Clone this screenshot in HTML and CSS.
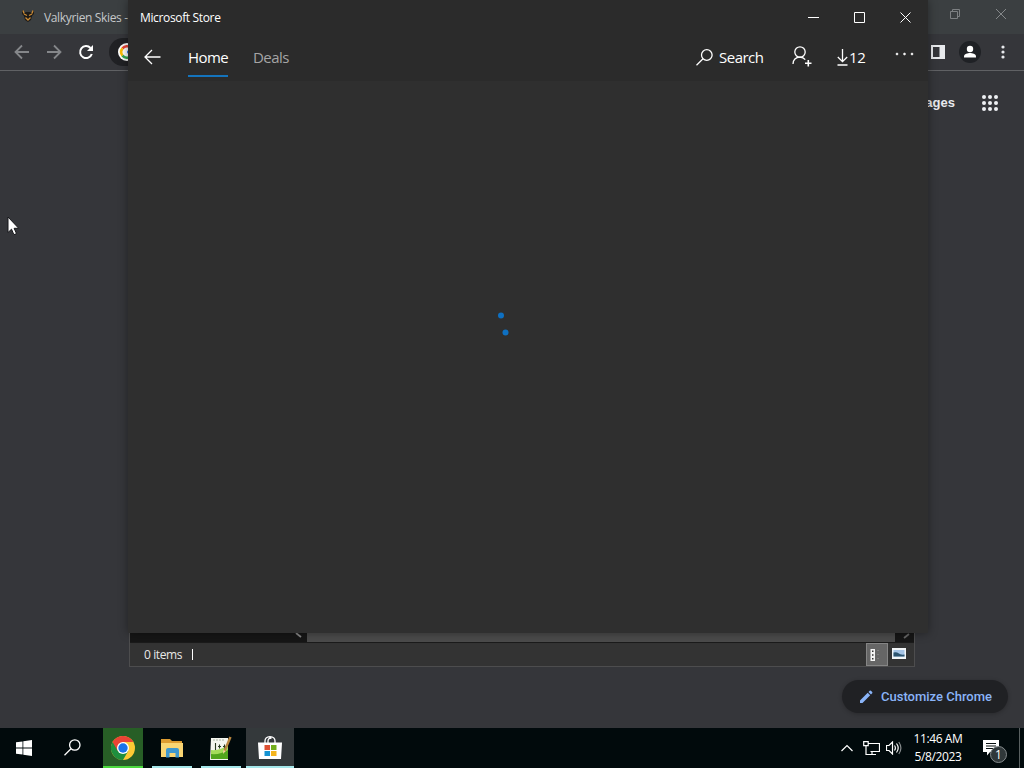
FILE: index.html
```html
<!DOCTYPE html>
<html lang="en">
<head>
    <meta charset="UTF-8">
    <meta name="viewport" content="width=device-width, initial-scale=1.0">
    <title>Desktop</title>
    <link rel="stylesheet" href="styles.css">
</head>
<body>
    <div class="desktop">
        <!-- Browser window -->
        <div class="browser">
            <div class="tab-strip">
                <svg class="favicon" width="14" height="14" viewBox="0 0 14 14">
                    <path d="M1 1l2 3 2-1h4l2 1 2-3v4l-2 2-1 4-3 2-3-2-1-4-2-2z" fill="#1c1a18"/>
                    <path d="M2 1.500l1 3M12 1.500l-1 3M3 5l3 1.500M11 5L8 6.500M4.500 8.500L7 11l2.500-2.500" fill="none" stroke="#c98a35" stroke-width="1.300"/>
                </svg>
                <span class="tab-title">Valkyrien Skies -</span>
                <div class="browser-controls">
                    <svg width="12" height="12" viewBox="0 0 12 12" fill="none" stroke="#7d8082"><path d="M1.500 3.500h7v7h-7zM3.500 3V1.500h7v7H9"/></svg>
                    <svg width="12" height="12" viewBox="0 0 12 12" fill="none" stroke="#85888a"><path d="M1 1l10 10M11 1L1 11"/></svg>
                </div>
            </div>
            <div class="toolbar">
                <svg width="16" height="16" viewBox="0 0 16 16" fill="none" stroke="#85878a" stroke-width="1.800"><path d="M15 8H2M8 1.500L1.500 8 8 14.500"/></svg>
                <svg width="16" height="16" viewBox="0 0 16 16" fill="none" stroke="#85878a" stroke-width="1.800"><path d="M1 8h13M8 1.500L14.500 8 8 14.500"/></svg>
                <svg width="16" height="16" viewBox="0 0 16 16" fill="none" stroke="#fff" stroke-width="2"><path d="M13.800 10A6 6 0 1 1 12.500 4"/><path d="M15 1v6H9z" fill="#fff" stroke="none"/></svg>
                <div class="address">
                    <svg width="18" height="18" viewBox="0 0 18 18">
                        <circle cx="9" cy="9" r="9" fill="#fff"/>
                        <g fill="none" stroke-width="2.600">
                            <path d="M4.500 5.400A5.800 5.800 0 0 1 13 4.800" stroke="#ea4335"/>
                            <path d="M4.500 5.400a5.800 5.800 0 0 0 0 7.200" stroke="#fbbc05"/>
                            <path d="M4.500 12.600a5.800 5.800 0 0 0 8.500.6" stroke="#34a853"/>
                            <path d="M9 9h5.500a6 6 0 0 1-1.500 4.200" stroke="#4285f4"/>
                        </g>
                    </svg>
                </div>
                <div class="toolbar-end">
                    <svg width="14" height="14" viewBox="0 0 14 14"><path fill="#e8eaed" fill-rule="evenodd" d="M0 0h14v14H0zM2 2v10h6.500V2z"/></svg>
                    <svg class="profile" width="22" height="22" viewBox="0 0 22 22"><circle cx="11" cy="11" r="11" fill="#1f2125"/><circle cx="11" cy="8" r="3.200" fill="#fff"/><path d="M5 16.500v-1.200c0-2.200 3.800-3.300 6-3.300s6 1.100 6 3.300v1.200z" fill="#fff"/></svg>
                    <svg width="4" height="14" viewBox="0 0 4 14" fill="#e8eaed"><circle cx="2" cy="2" r="1.600"/><circle cx="2" cy="7" r="1.600"/><circle cx="2" cy="12" r="1.600"/></svg>
                </div>
            </div>
            <div class="new-tab">
                <div class="page-links">
                    <span class="images-link">Images</span>
                    <svg width="16" height="16" viewBox="0 0 16 16" fill="#eef0f2">
                        <circle cx="2" cy="2" r="2"/><circle cx="8" cy="2" r="2"/><circle cx="14" cy="2" r="2"/>
                        <circle cx="2" cy="8" r="2"/><circle cx="8" cy="8" r="2"/><circle cx="14" cy="8" r="2"/>
                        <circle cx="2" cy="14" r="2"/><circle cx="8" cy="14" r="2"/><circle cx="14" cy="14" r="2"/>
                    </svg>
                </div>
                <div class="customize">
                    <svg width="14" height="14" viewBox="0 0 14 14" fill="#8ab4f8"><path d="M1 10.500L8.700 2.800l2.500 2.500L3.500 13H1zM9.500 2l1.200-1.200q.6-.5 1.200 0l1.300 1.300q.5.600 0 1.200L12 4.500z"/></svg>
                    <span>Customize Chrome</span>
                </div>
            </div>
        </div>

        <!-- File explorer, mostly covered -->
        <div class="explorer">
            <div class="scroll-row">
                <div class="scroll-left"><svg width="8" height="6" viewBox="0 0 8 6"><path d="M1 0l5 4" stroke="#888" stroke-width="1.800"/></svg></div>
                <div class="scroll-thumb"></div>
                <div class="scroll-right"><svg width="8" height="6" viewBox="0 0 8 6"><path d="M1 5l5-4" stroke="#666" stroke-width="1.800"/></svg></div>
            </div>
            <div class="status-bar">
                <span class="item-count">0 items</span>
                <span class="divider"></span>
                <div class="view-details">
                    <svg width="14" height="14" viewBox="0 0 14 14"><path d="M1.500 1H6v12H1.500z" fill="#f4f4f4"/><path d="M3 2.500h1.500v1.500H3zM3 6.300h1.500v1.500H3zM3 10h1.500v1.500H3z" fill="#333"/><path d="M8 2.500h2M8 6.500h2M8 10.500h2" stroke="#7c7c7c"/></svg>
                </div>
                <svg class="view-large" width="14" height="11" viewBox="0 0 14 11"><path d="M0 0h14v11H0z" fill="#f2f6f8"/><path d="M1.500 2h11v6.500h-11z" fill="#a5c4e6"/><path d="M1.500 4.500q3-1 5 .8t6 1.200v2h-11z" fill="#2d5570"/></svg>
            </div>
        </div>

        <!-- Store window -->
        <div class="store">
            <div class="store-header">
                <div class="store-title-bar">
                    <span class="store-title">Microsoft Store</span>
                    <div class="store-controls">
                        <svg width="11" height="11" viewBox="0 0 11 11"><path d="M0 5.500h11"/></svg>
                        <svg width="11" height="11" viewBox="0 0 11 11"><path d="M.5.500h10v10H.5z"/></svg>
                        <svg width="11" height="11" viewBox="0 0 11 11"><path d="M.5.500l10 10M10.500.500l-10 10"/></svg>
                    </div>
                </div>
                <div class="store-nav">
                    <svg class="back" width="17" height="16" viewBox="0 0 17 16"><path d="M16.500 8H1M8 1L1 8l7 7"/></svg>
                    <span class="nav-item active">Home</span>
                    <span class="nav-item">Deals</span>
                    <div class="store-actions">
                        <svg width="17" height="17" viewBox="0 0 17 17"><circle cx="10.800" cy="6" r="5.300"/><path d="M7 9.800L.5 16.300"/></svg>
                        <span class="search-label">Search</span>
                        <svg class="person" width="20" height="21" viewBox="0 0 20 21"><circle cx="8" cy="6" r="5.200"/><path d="M1 18q.3-6.500 7-6.800 3.500.2 5.200 2.500"/><path d="M16.300 14v6.500M13 17.200h6.500" stroke-width="1.600"/></svg>
                        <svg class="download" width="11" height="17" viewBox="0 0 11 17"><path d="M5.500 0v12.500M.8 8l4.700 4.700L10.200 8M.5 16h10"/></svg>
                        <span class="count">12</span>
                        <svg class="more" width="19" height="4" viewBox="0 0 19 4"><circle cx="2" cy="2" r="1"/><circle cx="9.500" cy="2" r="1"/><circle cx="17" cy="2" r="1"/></svg>
                    </div>
                </div>
            </div>
            <div class="store-body">
                <svg width="24" height="32" viewBox="0 0 24 32"><circle cx="9" cy="7.500" r="3"/><circle cx="13.500" cy="24.500" r="3"/></svg>
            </div>
        </div>

        <!-- Taskbar -->
        <div class="taskbar">
            <div class="task start">
                <svg width="16" height="16" viewBox="0 0 16 16" fill="#fff"><path d="M0 2.300l6.500-.9v6.200H0zM7.300 1.300L16 0v7.600H7.300zM0 8.400h6.500v6.200L0 13.700zM7.300 8.400H16V16l-8.700-1.200z"/></svg>
            </div>
            <div class="task find">
                <svg width="17" height="17" viewBox="0 0 17 17" fill="none" stroke="#fff" stroke-width="1.300"><circle cx="10.800" cy="6" r="5.200"/><path d="M7 9.800L.5 16.300"/></svg>
            </div>
            <div class="task chrome">
                <svg width="24" height="24" viewBox="0 0 24 24">
                    <circle cx="12" cy="12" r="12" fill="#fcc934"/>
                    <path d="M12 12L1.600 6A12 12 0 0 0 12 24l5.200-9z" fill="#1e8e3e"/>
                    <path d="M1.600 6a12 12 0 0 1 20.800 0H12l-5.200 9z" fill="#ea4335"/>
                    <circle cx="12" cy="12" r="6" fill="#fff"/><circle cx="12" cy="12" r="4.700" fill="#1a73e8"/>
                </svg>
            </div>
            <div class="task open">
                <svg width="22" height="19" viewBox="0 0 22 19"><path d="M0 0h9l2 2h10v5H0z" fill="#dd9c31"/><path d="M0 4h22v14H0z" fill="#f9d573"/><path d="M5 18.500V11q0-2 2-2h9q2 0 2 2v7.500h-3.500V14h-6v4.500z" fill="#3e97ce"/></svg>
            </div>
            <div class="task open">
                <svg width="24" height="25" viewBox="0 0 24 25">
                    <path d="M2 2h17v22H1z" fill="#f4f6ef"/><path d="M2 14q9 1 17-5v14H2z" fill="#a4dc5a"/><path d="M2 18q9 1 17-4v9H2z" fill="#51a51c"/>
                    <path d="M4 4h11" stroke="#a9b5a3" stroke-dasharray="2 1"/><path d="M6.500 7v7M9 10.500h3M14 10.500h3M10.500 8.500v4M15.500 8.500v4" stroke="#293b22" stroke-width="1.100"/>
                    <path d="M21.500 1L15.500 15" stroke="#b8863f" stroke-width="2.400"/><path d="M14.400 14l-.4 4 2.700-3z" fill="#f3d69c"/>
                </svg>
            </div>
            <div class="task open current">
                <svg width="24" height="24" viewBox="0 0 24 24"><path d="M7 7V5q0-4 5-4.300Q17 1 17 5v2M10 7V5q0-3 3.500-3" fill="none" stroke="#fff" stroke-width="1.300"/><path d="M0 6.500h24L23 23H1z" fill="#fff"/><path d="M6.500 9H12v5H6.500z" fill="#dd5033"/><path d="M13 9h5.500v5H13z" fill="#72ae1d"/><path d="M6.500 15H12v5H6.500z" fill="#1593d2"/><path d="M13 15h5.500v5H13z" fill="#f4b41c"/></svg>
            </div>
            <div class="tray">
                <svg width="12" height="8" viewBox="0 0 12 8"><path d="M.5 7L6 1.500 11.500 7"/></svg>
                <svg class="network" width="17" height="15" viewBox="0 0 17 15"><path d="M5.500 2.500h11v8h-9M9 11v2.500M6 13.500h7M.7.700h4.500v4H.7zM3 5v8.500h3"/></svg>
                <svg class="volume" width="16" height="14" viewBox="0 0 16 14"><path d="M.5 4.500H3L6.500 1v12L3 9.500H.5zM8.500 4.500q1.800 2.500 0 5M10.500 2.500q3.400 4.500 0 9"/><path d="M12.800 1q4.200 6 0 12" stroke="#868b8c"/></svg>
                <div class="clock">
                    <span class="time">11:46 AM</span>
                    <span class="date">5/8/2023</span>
                </div>
                <div class="notifications">
                    <svg width="16" height="16" viewBox="0 0 16 16"><path d="M0 0h16v12H7l-3 3.500V12H0z" fill="#fff" stroke="none"/><path d="M3 3.500h10M3 6h10M3 8.500h7" stroke="#081011"/></svg>
                    <span class="badge">1</span>
                </div>
                <span class="show-desktop"></span>
            </div>
        </div>

        <svg class="cursor" width="13" height="20" viewBox="0 0 13 20"><path d="M1 1v15.500l3.500-3.300 2.400 5.500 2.600-1.100-2.400-5.300h4.600z" fill="#fff" stroke="#16171a"/></svg>
    </div>
</body>
</html>
```
FILE: styles.css
```css
* {
    box-sizing: border-box;
}

body {
    margin: 0;
    background: #35363a;
    font-family: "Open Sans", "Noto Sans", sans-serif;
    color: #fff;
}

svg {
    display: block;
    flex: none;
}

.desktop {
    position: relative;
    width: 1024px;
    height: 768px;
    overflow: hidden;
    display: flex;
    flex-direction: column;
    white-space: nowrap;
}

/* Browser */
.browser {
    height: 728px;
    display: flex;
    flex-direction: column;
}

.tab-strip {
    height: 34px;
    background: #3b3f41;
    display: flex;
    align-items: center;
    padding: 0 17px 2px 21px;
}

.tab-title {
    margin: 2px 0 0 9px;
    font-size: 12px;
    letter-spacing: -0.35px;
    color: #c5c8ca;
}

.browser-controls {
    display: flex;
    gap: 34px;
    margin: -4px 0 0 auto;
}

.toolbar {
    height: 37px;
    border-bottom: 1px solid #606164;
    display: flex;
    align-items: center;
    gap: 16px;
    padding: 0 19px 0 14px;
}

.address {
    width: 700px;
    height: 28px;
    margin-left: -1px;
    border-radius: 14px;
    background: #202124;
    display: flex;
    align-items: center;
    padding-left: 9px;
}

.toolbar-end {
    display: flex;
    align-items: center;
    gap: 14px;
    margin-left: auto;
}

.toolbar-end .profile {
    margin-right: 6px;
}

.new-tab {
    flex: 1;
    display: flex;
    flex-direction: column;
    justify-content: space-between;
    align-items: flex-end;
    padding: 24px 16px 15px;
}

.page-links {
    display: flex;
    align-items: center;
    gap: 27px;
    margin-right: 10px;
    font: bold 13px "Liberation Sans", sans-serif;
    color: #e8eaed;
}

.images-link {
    margin-top: -2px;
}

.customize {
    width: 166px;
    height: 33px;
    border-radius: 17px;
    background: #202124;
    box-shadow: 0 1px 4px rgba(0, 0, 0, 0.25);
    display: flex;
    align-items: center;
    gap: 8px;
    padding-left: 17px;
    font: 500 13px Roboto, sans-serif;
    color: #8ab4f8;
}

/* Explorer */
.explorer {
    position: absolute;
    left: 129px;
    top: 560px;
    width: 786px;
    height: 107px;
    border: 1px solid #4d4d4e;
    background: #333;
    padding-top: 72px;
}

.scroll-row {
    height: 10px;
    display: flex;
    background: #161616;
    border-bottom: 1px solid #1b1b1b;
}

.scroll-left {
    width: 177px;
    padding-left: 165px;
}

.scroll-thumb {
    flex: 1;
    background: #4b4b4b;
}

.scroll-right {
    width: 19px;
    padding-left: 8px;
}

.status-bar {
    height: 23px;
    display: flex;
    align-items: center;
    padding-left: 14px;
    font-size: 12px;
    color: #e8e8e8;
}

.item-count {
    width: 48px;
    letter-spacing: -0.4px;
}

.divider {
    width: 1px;
    height: 11px;
    background: #fff;
}

.view-details {
    width: 22px;
    height: 23px;
    margin-left: auto;
    border: 1px solid #858585;
    background: #666;
    display: flex;
    align-items: center;
    padding-left: 2px;
}

.view-large {
    margin: -2px 8px 0 4px;
}

/* Store */
.store {
    position: absolute;
    left: 128px;
    top: 0;
    width: 800px;
    height: 633px;
    background: #2f2f2f;
    box-shadow: 0 0 9px rgba(0, 0, 0, 0.4);
    display: flex;
    flex-direction: column;
}

.store svg {
    stroke: #fff;
    fill: none;
}

.store-header {
    height: 81px;
    background: #2b2b2b;
}

.store-title-bar {
    height: 35px;
    display: flex;
    align-items: center;
    padding: 0 17px 0 12px;
}

.store-title {
    font-size: 12px;
    letter-spacing: -0.35px;
}

.store-controls {
    display: flex;
    gap: 35px;
    margin: -1px 0 0 auto;
}

.store-nav {
    height: 46px;
    display: flex;
    align-items: center;
    padding: 0 14px 0 16px;
    font-size: 15px;
}

.store-nav svg {
    stroke-width: 1.3;
}

.back {
    margin: -2px 27px 0 0;
}

.nav-item {
    height: 38px;
    line-height: 37px;
    margin-right: 25px;
    letter-spacing: -0.55px;
    color: #a5a5a5;
}

.nav-item.active {
    width: 40px;
    border-bottom: 2px solid #1474bd;
    color: #fff;
}

.store-actions {
    display: flex;
    align-items: center;
    margin: -2px 0 0 auto;
}

.search-label {
    width: 45px;
    margin-left: 6px;
    letter-spacing: -0.5px;
}

.person {
    margin: -2px 0 0 28px;
}

.download {
    margin-left: 25px;
}

.count {
    width: 17px;
    margin-left: 1px;
    letter-spacing: -0.3px;
}

.store .more {
    margin: -7px 0 0 29px;
    fill: #fff;
    stroke-width: 0.6;
}

.store-body {
    padding: 227px 0 0 364px;
}

.store .store-body svg {
    fill: #0e70c2;
    stroke: none;
}

/* Taskbar */
.taskbar {
    height: 40px;
    background: #010a0c;
    display: flex;
    align-items: stretch;
}

.task {
    width: 40px;
    margin-right: 9px;
    display: flex;
    align-items: center;
    justify-content: center;
    border-bottom: 2px solid transparent;
}

.start {
    width: 48px;
    margin-right: 0;
    padding-top: 2px;
}

.find {
    width: 48px;
    margin-right: 7px;
    padding-top: 1px;
}

.chrome {
    background: #275e26;
    border-color: #4bd83e;
    padding-top: 2px;
}

.open {
    border-color: #a5e7ea;
    padding-top: 2px;
}

.current {
    width: 48px;
    margin: 0 0 0 -4px;
    background: #34393b;
}

.tray {
    flex: 1;
    display: flex;
    align-items: center;
    justify-content: flex-end;
}

.tray svg {
    fill: none;
    stroke: #fff;
    stroke-width: 1.2;
}

.network {
    margin-left: 10px;
}

.volume {
    margin-left: 6px;
}

.clock {
    width: 72px;
    display: flex;
    flex-direction: column;
    align-items: center;
    font-size: 12px;
    line-height: 18px;
    letter-spacing: -0.4px;
    margin-top: -1px;
}

.notifications {
    position: relative;
    margin: 0 20px 0 9px;
}

.badge {
    position: absolute;
    left: 7px;
    top: 6px;
    width: 17px;
    height: 17px;
    border: 1px solid #858b8d;
    border-radius: 50%;
    background: #30383a;
    font-size: 12px;
    line-height: 15px;
    text-align: center;
}

.show-desktop {
    width: 5px;
    height: 40px;
    border-left: 1px solid #596061;
}

.cursor {
    position: absolute;
    left: 7px;
    top: 216px;
}
```
